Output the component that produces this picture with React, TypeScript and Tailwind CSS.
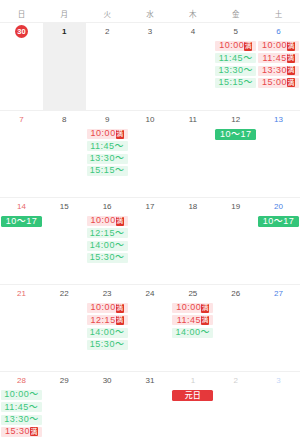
type Ev =
  | { kind: "full"; time: string }
  | { kind: "open"; time: string }
  | { kind: "solid"; label: string }
  | { kind: "holiday"; label: string };

type Day = {
  n: number;
  other?: boolean;
  today?: boolean;
  selected?: boolean;
  events?: Ev[];
};

const full = (time: string): Ev => ({ kind: "full", time });
const open = (time: string): Ev => ({ kind: "open", time });
const solid: Ev = { kind: "solid", label: "10～17" };

const weeks: Day[][] = [
  [
    { n: 30, other: true, today: true },
    { n: 1, selected: true },
    { n: 2 },
    { n: 3 },
    { n: 4 },
    { n: 5, events: [full("10:00"), open("11:45"), open("13:30"), open("15:15")] },
    { n: 6, events: [full("10:00"), full("11:45"), full("13:30"), full("15:00")] },
  ],
  [
    { n: 7 },
    { n: 8 },
    { n: 9, events: [full("10:00"), open("11:45"), open("13:30"), open("15:15")] },
    { n: 10 },
    { n: 11 },
    { n: 12, events: [solid] },
    { n: 13 },
  ],
  [
    { n: 14, events: [solid] },
    { n: 15 },
    { n: 16, events: [full("10:00"), open("12:15"), open("14:00"), open("15:30")] },
    { n: 17 },
    { n: 18 },
    { n: 19 },
    { n: 20, events: [solid] },
  ],
  [
    { n: 21 },
    { n: 22 },
    { n: 23, events: [full("10:00"), full("12:15"), open("14:00"), open("15:30")] },
    { n: 24 },
    { n: 25, events: [full("10:00"), full("11:45"), open("14:00")] },
    { n: 26 },
    { n: 27 },
  ],
  [
    { n: 28, events: [open("10:00"), open("11:45"), open("13:30"), full("15:30")] },
    { n: 29 },
    { n: 30 },
    { n: 31 },
    { n: 1, other: true, events: [{ kind: "holiday", label: "元日" }] },
    { n: 2, other: true },
    { n: 3, other: true },
  ],
];

const labels = ["日", "月", "火", "水", "木", "金", "土"];

function Chip({ ev }: { ev: Ev }) {
  if (ev.kind === "full") {
    return (
      <div className="mx-[1px] h-[10px] rounded-[1px] bg-[#fde4e5] flex items-center justify-center text-[#e8474a] text-[9px] tracking-[0.5px] font-medium">
        <span>{ev.time}</span>
        <span className="w-[8px] h-[9px] rounded-[1px] bg-[#e0352b] text-white text-[6.5px] leading-none flex items-center justify-center tracking-normal">
          満
        </span>
      </div>
    );
  }
  if (ev.kind === "open") {
    return (
      <div className="mx-[1px] h-[10px] rounded-[1px] bg-[#e7f8ee] flex items-center justify-center text-[#3cc67c] text-[9px] tracking-[0.5px] font-medium">
        {ev.time}～
      </div>
    );
  }
  if (ev.kind === "solid") {
    return (
      <div className="mx-[1px] h-[11px] rounded-[1.5px] bg-[#33c57a] flex items-center justify-center text-white text-[9px] tracking-[0.5px] font-medium">
        {ev.label}
      </div>
    );
  }
  return (
    <div className="mx-[1px] h-[11px] rounded-[1.5px] bg-[#e5383b] flex items-center justify-center text-white text-[8px] font-medium">
      {ev.label}
    </div>
  );
}

function dateColor(col: number, d: Day) {
  if (d.other) {
    if (col === 0) return "text-[#f4c4c4]";
    if (col === 6) return "text-[#c4d6f6]";
    return "text-[#cfcfcf]";
  }
  if (d.selected) return "text-[#222] font-bold";
  if (col === 0) return "text-[#e86a6a]";
  if (col === 6) return "text-[#4a82e6]";
  return "text-[#555]";
}

export default function App() {
  return (
    <div
      className="w-[300px] bg-white opacity-[0.999]"
      style={{ fontFamily: '"Liberation Sans", "Noto Sans CJK JP", sans-serif' }}
    >
      <div className="grid grid-cols-7 h-[23px] border-b border-[#f0f0f0]">
        {labels.map((l) => (
          <div key={l} className="flex items-end justify-center pb-[2px] text-[7.5px] text-[#9a9a9a] leading-[10px]">
            {l}
          </div>
        ))}
      </div>
      {weeks.map((week, wi) => (
        <div
          key={wi}
          className={`grid grid-cols-7 h-[87px] ${wi > 0 ? "border-t border-[#f0f0f0]" : ""}`}
        >
          {week.map((d, ci) => (
            <div key={ci} className={`flex flex-col ${d.selected ? "bg-[#f0f0f0]" : ""}`}>
              <div className="h-[17px] flex items-center justify-center text-[8px]">
                {d.today ? (
                  <span className="w-[13px] h-[13px] rounded-full bg-[#e5383b] text-white font-bold flex items-center justify-center text-[7.5px]">
                    {d.n}
                  </span>
                ) : (
                  <span className={dateColor(ci, d)}>{d.n}</span>
                )}
              </div>
              <div className="flex flex-col gap-[2.3px] mt-[1px]">
                {d.events?.map((ev, ei) => <Chip key={ei} ev={ev} />)}
              </div>
            </div>
          ))}
        </div>
      ))}
    </div>
  );
}
